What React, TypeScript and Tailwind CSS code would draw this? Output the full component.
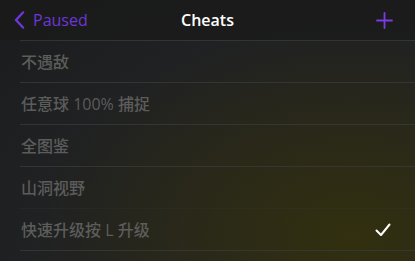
import React from "react";

const cheats = [
  { name: "不遇敌", on: false },
  { name: "任意球 100% 捕捉", on: false },
  { name: "全图鉴", on: false },
  { name: "山洞视野", on: false },
  { name: "快速升级按 L 升级", on: true },
];

export default function App() {
  return (
    <div
      className="w-[415px] h-[261px] overflow-hidden bg-[#1b1b1c] bg-[radial-gradient(ellipse_at_85%_90%,#32300f_0%,#29281a_35%,#1f2123_65%,#1b1b1c_100%)]"
      style={{ fontFamily: '"Open Sans", "Noto Sans CJK SC", sans-serif' }}
    >
      {/* nav */}
      <div className="h-[40px] flex items-center justify-between px-[14px] bg-[#1a1a1a]/70">
        <div className="flex items-center gap-[8px] w-[120px]">
          <svg width="11" height="18" viewBox="0 0 11 18" fill="none">
            <path d="M9 1.5L2 9l7 7.5" stroke="#6d36d8" strokeWidth="2.4" strokeLinecap="round" strokeLinejoin="round" />
          </svg>
          <span className="text-[16px] text-[#6d36d8] leading-none">Paused</span>
        </div>
        <span className="text-[16px] font-semibold text-white leading-none">Cheats</span>
        <div className="w-[120px] flex justify-end pr-[8px]">
          <svg width="17" height="17" viewBox="0 0 17 17">
            <path d="M8.5 1v15M1 8.5h15" stroke="#7a3ae6" strokeWidth="1.8" strokeLinecap="round" />
          </svg>
        </div>
      </div>
      {/* list */}
      <div className="pl-[20px]">
        {cheats.map((c, i) => (
          <div
            key={i}
            className={
              "h-[42px] flex items-center justify-between pr-[24px] border-t " +
              (i === 4 ? "border-[#3a3a38]/20" : "border-[#3a3a38]/80")
            }
          >
            <span className="pl-[1px] text-[16px] font-medium text-[#5c5c5a] leading-none">{c.name}</span>
            {c.on && (
              <svg width="16" height="14" viewBox="0 0 16 14" fill="none">
                <path d="M1.5 7.5l4.5 4.5L14.5 1.5" stroke="#ffffff" strokeWidth="2" strokeLinecap="round" strokeLinejoin="round" />
              </svg>
            )}
          </div>
        ))}
        <div className="border-t border-[#3a3a38]/80" />
      </div>
    </div>
  );
}
